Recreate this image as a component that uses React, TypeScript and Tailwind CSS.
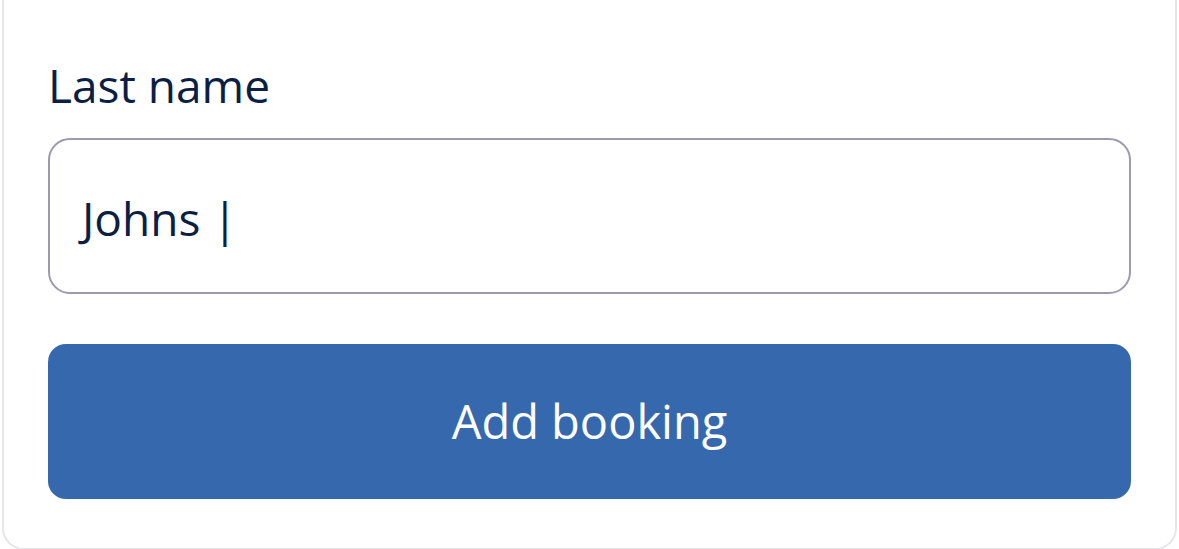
export default function App() {
  return (
    <div className="min-h-screen bg-white font-['Open_Sans',sans-serif]">
      <div className="mx-[2px] -mt-6 pt-6 rounded-b-[22px] border-2 border-t-0 border-[#e6e6ea] bg-white px-[44px] pb-[49px]">
        <div className="pt-[55px]">
          <label className="block text-[46px] leading-[60px] text-[#0b1f45]">Last name</label>
        </div>
        <div className="mt-[23px] h-[156px] rounded-[22px] border-2 border-[#9c9bad] flex items-center px-[32px] pt-[4px]">
          <span className="text-[46px] text-[#0b1f45]">Johns |</span>
        </div>
        <button className="mt-[50px] w-full h-[155px] rounded-[18px] bg-[#3668ad] text-white text-[47px] flex items-center justify-center">
          Add booking
        </button>
      </div>
    </div>
  );
}
